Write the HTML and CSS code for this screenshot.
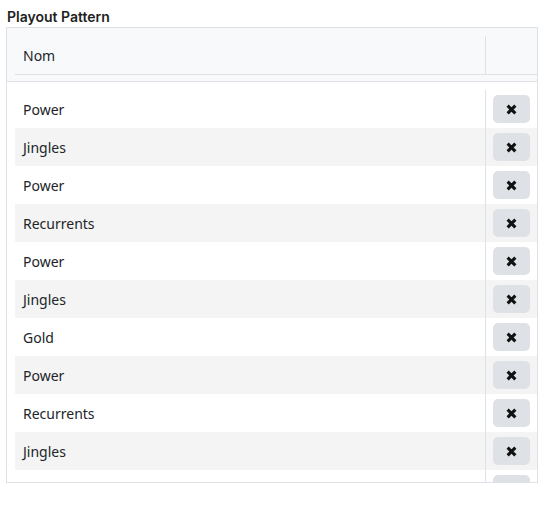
FILE: index.html
```html
<!DOCTYPE html>
<html lang="fr">
<head>
    <meta charset="UTF-8">
    <title>Playout Pattern</title>
    <link rel="stylesheet" href="styles.css">
</head>
<body>

<div class="page">
    <div class="title">Playout Pattern</div>

    <div class="grid-box">
        <div class="grid-head">
            <div class="row head-row">
                <div class="cell name">Nom</div>
                <div class="cell action"></div>
            </div>
        </div>

        <div class="grid-body">
            <div class="row"><div class="cell name">Power</div><div class="cell action"><button class="del"><svg viewBox="0 0 10 10"><path d="M1.5 1.5 L8.5 8.5 M8.5 1.5 L1.5 8.5"/></svg></button></div></div>
            <div class="row"><div class="cell name">Jingles</div><div class="cell action"><button class="del"><svg viewBox="0 0 10 10"><path d="M1.5 1.5 L8.5 8.5 M8.5 1.5 L1.5 8.5"/></svg></button></div></div>
            <div class="row"><div class="cell name">Power</div><div class="cell action"><button class="del"><svg viewBox="0 0 10 10"><path d="M1.5 1.5 L8.5 8.5 M8.5 1.5 L1.5 8.5"/></svg></button></div></div>
            <div class="row"><div class="cell name">Recurrents</div><div class="cell action"><button class="del"><svg viewBox="0 0 10 10"><path d="M1.5 1.5 L8.5 8.5 M8.5 1.5 L1.5 8.5"/></svg></button></div></div>
            <div class="row"><div class="cell name">Power</div><div class="cell action"><button class="del"><svg viewBox="0 0 10 10"><path d="M1.5 1.5 L8.5 8.5 M8.5 1.5 L1.5 8.5"/></svg></button></div></div>
            <div class="row"><div class="cell name">Jingles</div><div class="cell action"><button class="del"><svg viewBox="0 0 10 10"><path d="M1.5 1.5 L8.5 8.5 M8.5 1.5 L1.5 8.5"/></svg></button></div></div>
            <div class="row"><div class="cell name">Gold</div><div class="cell action"><button class="del"><svg viewBox="0 0 10 10"><path d="M1.5 1.5 L8.5 8.5 M8.5 1.5 L1.5 8.5"/></svg></button></div></div>
            <div class="row"><div class="cell name">Power</div><div class="cell action"><button class="del"><svg viewBox="0 0 10 10"><path d="M1.5 1.5 L8.5 8.5 M8.5 1.5 L1.5 8.5"/></svg></button></div></div>
            <div class="row"><div class="cell name">Recurrents</div><div class="cell action"><button class="del"><svg viewBox="0 0 10 10"><path d="M1.5 1.5 L8.5 8.5 M8.5 1.5 L1.5 8.5"/></svg></button></div></div>
            <div class="row"><div class="cell name">Jingles</div><div class="cell action"><button class="del"><svg viewBox="0 0 10 10"><path d="M1.5 1.5 L8.5 8.5 M8.5 1.5 L1.5 8.5"/></svg></button></div></div>
            <div class="row"><div class="cell name"></div><div class="cell action"><button class="del"><svg viewBox="0 0 10 10"><path d="M1.5 1.5 L8.5 8.5 M8.5 1.5 L1.5 8.5"/></svg></button></div></div>
        </div>
    </div>
</div>

</body>
</html>
```

FILE: styles.css
```css
/* Mise en page générale */
body {
    margin: 0;
    font-family: 'Noto Sans', 'Open Sans', sans-serif;
    color: #212529;
    background: #fff;
}

.page {
    padding: 8px 6px 0 6px;
}

.title {
    font-family: 'Inter', 'Noto Sans', sans-serif;
    font-weight: 600;
    font-size: 14px;
    line-height: 17px;
    margin: 0 0 2px 1px;
    color: #1f1f1f;
}

/* Grille */
.grid-box {
    border: 1px solid #dee2e6;
    height: 454px;
    overflow: hidden;
}

.grid-head {
    background-color: #f8f9fa;
    padding: 8px 0 6px 8px;
    border-bottom: 1px solid #dee2e6;
}

.grid-body {
    padding: 8px 0 0 8px;
}

.row {
    display: grid;
    grid-template-columns: 1fr 51px;
    height: 38px;
}

.head-row {
    border-bottom: 1px solid #dee2e6;
}

.grid-body .row:nth-child(even) {
    background-color: #f4f4f4;
}

.cell {
    display: flex;
    align-items: center;
    font-size: 14px;
}

.cell.name {
    padding-left: 8px;
    border-right: 1px solid #dee2e6;
}

.cell.action {
    padding-left: 7px;
}

/* Bouton de suppression */
.del {
    width: 37px;
    height: 28px;
    border: none;
    border-radius: 5px;
    background-color: #dee2e6;
    display: flex;
    align-items: center;
    justify-content: center;
    padding: 0;
    cursor: pointer;
}

.del svg {
    width: 11px;
    height: 11px;
    stroke: #111;
    stroke-width: 2.8;
    fill: none;
}
```
